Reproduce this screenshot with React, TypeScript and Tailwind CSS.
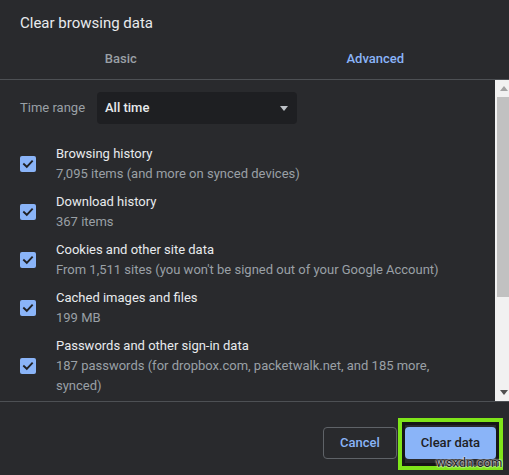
import React from 'react';

const ROWS: { title: string; lines: string[] }[] = [
  { title: 'Browsing history', lines: ['7,095 items (and more on synced devices)'] },
  { title: 'Download history', lines: ['367 items'] },
  { title: 'Cookies and other site data', lines: ["From 1,511 sites (you won't be signed out of your Google Account)"] },
  { title: 'Cached images and files', lines: ['199 MB'] },
  {
    title: 'Passwords and other sign-in data',
    lines: ['187 passwords (for dropbox.com, packetwalk.net, and 185 more,', 'synced)'],
  },
];

function CheckBox() {
  return (
    <div className="w-4 h-4 shrink-0 rounded-[2px] bg-[#8ab4f8] flex items-center justify-center">
      <svg width="12" height="12" viewBox="0 0 12 12" fill="none">
        <path d="M2 6.2 L4.8 8.8 L10 3.4" stroke="#202124" strokeWidth="1.9" strokeLinecap="square" />
      </svg>
    </div>
  );
}

function Triangle({ up, color }: { up?: boolean; color: string }) {
  return (
    <svg width="8" height="5" viewBox="0 0 8 5">
      <polygon points={up ? '0,5 8,5 4,0' : '0,0 8,0 4,5'} fill={color} />
    </svg>
  );
}

export default function App() {
  return (
    <div
      className="relative w-[509px] h-[475px] overflow-hidden bg-[#292a2d] flex flex-col"
      style={{ fontFamily: 'Roboto, "Liberation Sans", Arial, sans-serif' }}
    >
      {/* header */}
      <div className="h-[39px] pt-[13px] pl-5 text-[15px] leading-[20px] text-[#e8eaed]">
        Clear browsing data
      </div>
      <div className="h-[41px] flex border-b border-[#4d5054] text-[13px] font-medium">
        <div className="w-[244px] flex items-center justify-center text-[#9aa0a6]">Basic</div>
        <div className="w-[270px] flex items-center justify-center text-[#8ab4f8]">Advanced</div>
      </div>

      {/* scroll area */}
      <div className="h-[321px] flex overflow-hidden">
        <div className="flex-1 overflow-hidden pl-5">
          <div className="mt-3 h-8 flex items-center">
            <div className="w-[77px] text-[13px] text-[#9aa0a6]">Time range</div>
            <div className="w-[200px] h-8 rounded bg-[#1e1f22] flex items-center justify-between pl-2 pr-[9px]">
              <span className="text-[13px] font-medium text-[#e8eaed]">All time</span>
              <Triangle color="#bdc1c6" />
            </div>
          </div>
          <div className="mt-4 flex flex-col">
            {ROWS.map(r => (
              <div key={r.title} className="py-1 flex items-center gap-5">
                <CheckBox />
                <div className="text-[13px] leading-[20px] whitespace-nowrap">
                  <div className="text-[#e8eaed]">{r.title}</div>
                  {r.lines.map(l => (
                    <div key={l} className="text-[#9aa0a6]">{l}</div>
                  ))}
                </div>
              </div>
            ))}
          </div>
        </div>
        <div className="w-[14px] overflow-hidden bg-[#f1f1f1]">
          <div className="w-[17px] h-full flex flex-col">
            <div className="h-[17px] flex items-center justify-center">
              <Triangle up color="#a3a3a3" />
            </div>
            <div className="h-[200px] ml-[2px] mr-[2px] bg-[#c1c1c1]" />
            <div className="flex-1" />
            <div className="h-[17px] flex items-center justify-center">
              <Triangle color="#505050" />
            </div>
          </div>
        </div>
      </div>

      {/* footer */}
      <div className="flex-1 border-t border-[#4d5054] flex justify-end items-start gap-2 pt-[25px] pr-[13px]">
        <button className="w-[74px] h-8 rounded border border-[#5f6368] text-[13px] font-medium text-[#8ab4f8]">
          Cancel
        </button>
        <button className="w-[91px] h-8 rounded bg-[#8ab4f8] text-[13px] font-medium text-[#202124]">
          Clear data
        </button>
      </div>

      {/* highlight annotation */}
      <div className="absolute left-[398px] top-[418px] w-[105px] h-[52px] border-4 border-[#7fe51a]">
        <div className="w-full h-full border-[3px] border-[#161616]" />
      </div>
      <div
        className="absolute left-[436px] top-[455px] text-[13px] leading-[16px] text-[#1d1d1d]"
        style={{ textShadow: '0 0 2px #fff, 0 0 2px #fff' }}
      >
        wsxdn.com
      </div>
    </div>
  );
}
